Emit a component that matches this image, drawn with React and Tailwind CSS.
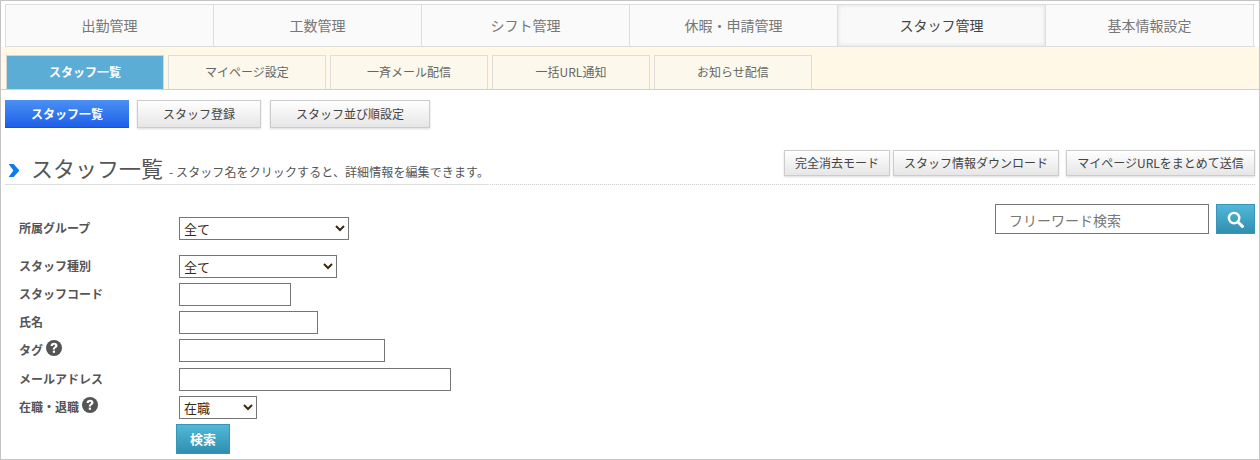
import React from 'react'

const mainTabs = ['出勤管理', '工数管理', 'シフト管理', '休暇・申請管理', 'スタッフ管理', '基本情報設定']
const subTabs = ['スタッフ一覧', 'マイページ設定', '一斉メール配信', '一括URL通知', 'お知らせ配信']

function HelpIcon() {
    return (
        <svg viewBox="0 0 16 16" className="w-[16px] h-[16px] ml-[3px] mt-[-3px]">
            <circle cx="8" cy="8" r="8" fill="#555" />
            <path d="M4.6 6c0-2 1.4-3.2 3.5-3.2 2 0 3.4 1.1 3.4 2.8 0 1.2-.7 1.9-1.6 2.4-.7.4-.9.7-.9 1.4H6.8c0-1.3.4-1.9 1.3-2.5.7-.4 1-.7 1-1.3 0-.5-.4-.8-1-.8-.7 0-1.1.4-1.2 1.2H4.6z" fill="#fff" />
            <rect x="6.8" y="10.6" width="2.2" height="2.2" fill="#fff" />
        </svg>
    )
}

function Row({ label, help, className, children }) {
    return (
        <div className={`flex items-center ${className}`}>
            <div className="w-[160px] pb-[2px] flex items-center text-xs font-bold text-[#555]">
                {label}
                {help && <HelpIcon />}
            </div>
            {children}
        </div>
    )
}

function GrayButton({ className, children }) {
    return (
        <button className={`h-[26px] border border-[#ccc] bg-gradient-to-b from-white to-[#e6e6e6] text-xs text-[#444] shadow-[0_1px_2px_rgba(0,0,0,0.15)] ${className}`}>
            {children}
        </button>
    )
}

export default function App() {
    return (
        <div className="w-[1260px] h-[460px] overflow-hidden border border-[#c4c4c4] bg-white pt-[3px] px-1 font-['Noto_Sans_CJK_JP','Noto_Sans',sans-serif]">
            <nav className="flex w-[1250px] h-[43px] border-y border-l border-[#ddd]">
                {mainTabs.map((tab, i) => (
                    <div
                        key={tab}
                        className={`w-[208px] pb-px flex items-center justify-center border-r border-[#ddd] text-sm ${i === 4 ? 'bg-[#f9f9f9] text-[#444] shadow-[inset_0_0_4px_rgba(0,0,0,0.12)]' : 'bg-[#fafafa] text-[#777]'}`}
                    >
                        {tab}
                    </div>
                ))}
            </nav>
            <div className="flex items-end gap-1 -mx-1 w-[1258px] h-[43px] pl-[5px] bg-[#fff8e6] border-b border-[#d0d0d0]">
                {subTabs.map((tab, i) => (
                    <div
                        key={tab}
                        className={`w-[158px] h-[34px] pb-px flex items-center justify-center border border-b-0 text-xs ${i === 0 ? 'bg-[#5badd6] border-[#d4d4d4] font-bold text-white' : 'bg-[#fcf9ec] border-[#ddd] text-[#666]'}`}
                    >
                        {tab}
                    </div>
                ))}
            </div>

            <div className="flex mt-[10px]">
                <button className="w-[124px] h-[28px] border-b border-[#1d52c0] bg-gradient-to-b from-[#4a90f4] to-[#1f5fe8] text-xs font-bold text-white">スタッフ一覧</button>
                <GrayButton className="!h-[28px] w-[124px] ml-2">スタッフ登録</GrayButton>
                <GrayButton className="!h-[28px] w-[160px] ml-[9px]">スタッフ並び順設定</GrayButton>
            </div>

            <div className="flex items-end w-[1250px] h-[35px] mt-[22px] border-b border-dotted border-[#ccc]">
                <div className="flex items-center h-[34px] border-b border-[#ddd] -mb-px w-[484px] shrink-0 whitespace-nowrap">
                    <svg viewBox="0 0 10 12" className="w-[11px] h-[13px] ml-[3px] mt-[6px] shrink-0">
                        <path d="M0.5 0h4.6L10.5 6l-5.4 6H0.5l4.4-6z" fill="#0a7bf0" />
                    </svg>
                    <h1 className="ml-[12px] -mt-[2px] text-[22px] font-normal text-[#555] leading-none">スタッフ一覧</h1>
                    <span className="ml-[6px] mt-[9px] text-xs tracking-[0.1px] text-[#555]">- スタッフ名をクリックすると、詳細情報を編集できます。</span>
                </div>
                <div className="flex ml-auto mb-[8px]">
                    <GrayButton className="w-[106px]">完全消去モード</GrayButton>
                    <GrayButton className="w-[166px] ml-[3px]">スタッフ情報ダウンロード</GrayButton>
                    <GrayButton className="w-[189px] ml-[7px]">マイページURLをまとめて送信</GrayButton>
                </div>
            </div>

            <div className="flex">
                <form className="pl-[14px] pt-[32px]">
                    <Row label="所属グループ">
                        <select className="w-[170px] h-[23px] border border-[#767676] bg-white text-[13px] text-[#3a2a14]">
                            <option>全て</option>
                        </select>
                    </Row>
                    <Row label="スタッフ種別" className="mt-[15px]">
                        <select className="w-[158px] h-[23px] border border-[#767676] bg-white text-[13px] text-[#3a2a14]">
                            <option>全て</option>
                        </select>
                    </Row>
                    <Row label="スタッフコード" className="mt-[5px]">
                        <input className="w-[112px] h-[23px] border border-[#767676]" />
                    </Row>
                    <Row label="氏名" className="mt-[5px]">
                        <input className="w-[139px] h-[23px] border border-[#767676]" />
                    </Row>
                    <Row label="タグ" help className="mt-[5px]">
                        <input className="w-[206px] h-[23px] border border-[#767676]" />
                    </Row>
                    <Row label="メールアドレス" className="mt-[6px]">
                        <input className="w-[272px] h-[23px] border border-[#767676]" />
                    </Row>
                    <Row label="在職・退職" help className="mt-[5px]">
                        <select className="w-[78px] h-[23px] border border-[#767676] bg-white text-[13px] text-[#3a2a14]">
                            <option>在職</option>
                        </select>
                    </Row>
                    <button type="button" className="block ml-[157px] mt-[5px] w-[54px] h-[30px] border border-[#3a94b4] bg-gradient-to-b from-[#52b8d8] to-[#2f8fb0] text-[13px] font-bold text-white">検索</button>
                </form>
                <div className="flex ml-auto pt-[19px] h-[50px]">
                    <input placeholder="フリーワード検索" className="w-[214px] h-[30px] border border-[#767676] px-[13px] pt-px text-sm placeholder:text-[#777]" />
                    <button className="flex items-center justify-center ml-[7px] w-[39px] h-[30px] border border-[#3a94b4] bg-gradient-to-b from-[#52b8d8] to-[#2f8fb0]">
                        <svg viewBox="0 0 18 18" className="w-[17px] h-[17px]">
                            <circle cx="7.5" cy="7.5" r="5.5" fill="none" stroke="#fff" strokeWidth="2.6" />
                            <path d="M11.6 11.6L16.3 16.3" stroke="#fff" strokeWidth="3.2" strokeLinecap="round" />
                        </svg>
                    </button>
                </div>
            </div>
        </div>
    )
}
